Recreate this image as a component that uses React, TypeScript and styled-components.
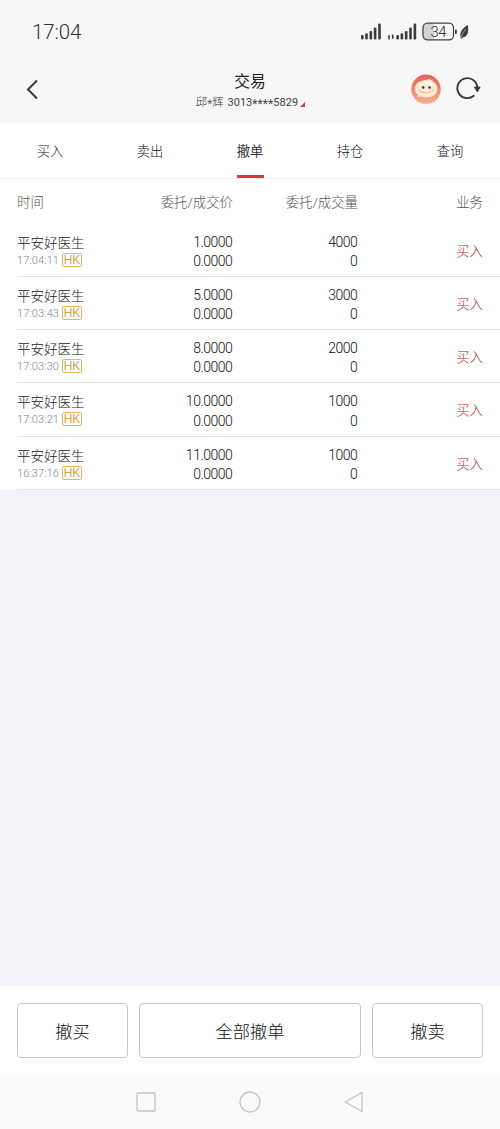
import React from 'react';
import styled, { createGlobalStyle } from 'styled-components';

const GlobalStyle = createGlobalStyle`
  * { box-sizing: border-box; }
  body { margin: 0; background: #f3f4f9; }
`;

const cjk = `'Noto Sans CJK SC', sans-serif`;

const Screen = styled.div`
  width: 500px;
  height: 1129px;
  display: flex;
  flex-direction: column;
  overflow: hidden;
  background: #f3f4f9;
  color: #444;
  font-family: Roboto, ${cjk};
  font-weight: 300;
`;

const StatusBar = styled.header`
  height: 56px;
  padding: 7px 31px 0 32px;
  display: flex;
  align-items: center;
  justify-content: space-between;
  background: #f7f7f7;
  flex: none;
`;

const Clock = styled.span`
  font-size: 20.5px;
  letter-spacing: -0.1px;
  color: #333;
`;

const TitleBar = styled.div`
  height: 67px;
  flex: none;
  display: grid;
  grid-template-columns: 100px 1fr 100px;
  background: #f7f7f7;
`;

const BackButton = styled.div`
  padding: 22px 0 0 25px;
`;

const TitleBlock = styled.div`
  display: flex;
  flex-direction: column;
  align-items: center;
  padding-top: 14px;
`;

const Title = styled.h1`
  margin: 0;
  font: 400 15.8px/22px ${cjk};
  color: #222;
`;

const Account = styled.div`
  display: flex;
  align-items: center;
  gap: 2px;
  padding: 1px 0 0 1px;
  font-size: 11px;
  line-height: 18px;
  color: #333;
  white-space: nowrap;
`;

const AccountNumber = styled.span`
  font-weight: 400;
  letter-spacing: 0.05px;
  margin-left: 1px;
  color: #444;
`;

const HolderName = styled.span`
  font-size: 11.4px;
`;

const Mask = styled.span`
  display: inline-block;
  vertical-align: -2px;
  font-size: 12px;
  line-height: 12px;
`;

const Corner = styled.svg`
  margin-top: 4px;
`;

const Actions = styled.div`
  display: flex;
  align-items: flex-start;
  gap: 14px;
  padding: 18px 0 0 11px;
`;

const Tabs = styled.nav`
  height: 56px;
  flex: none;
  display: grid;
  grid-template-columns: repeat(5, 1fr);
  background: #fff;
  border-bottom: 1px solid #f0f0f0;
`;

const Tab = styled.div<{ $active?: boolean }>`
  display: flex;
  flex-direction: column;
  align-items: center;
  justify-content: space-between;
  font: ${p => (p.$active ? 400 : 300)} 13.3px/56px ${cjk};
  color: ${p => (p.$active ? '#333' : '#111')};
  height: 55px;
  &::after {
    content: '';
    width: 27px;
    height: 3px;
    flex: none;
    margin-top: -4px;
    background: ${p => (p.$active ? '#d93a36' : 'transparent')};
  }
`;

const Table = styled.section`
  background: #fff;
  flex: none;
`;

const columns = `91px 125px 125px 125px`;

const HeadRow = styled.div`
  display: grid;
  grid-template-columns: ${columns};
  padding: 0 17px;
  height: 45px;
  line-height: 48px;
  font-size: 13.4px;
  color: #555;
`;

const HeadCell = styled.span<{ $right?: boolean }>`
  text-align: ${p => (p.$right ? 'right' : 'left')};
  white-space: nowrap;
`;

const Row = styled.div`
  display: grid;
  grid-template-columns: ${columns};
  height: 53.15px;
  margin-left: 17px;
  padding: 9px 17px 0 0;
  border-bottom: 1px solid #e4e4e6;
`;

const Stock = styled.div`
  font-size: 13.5px;
  line-height: 19px;
  padding-top: 1px;
  height: 19px;
  white-space: nowrap;
  color: #222;
`;

const Meta = styled.div`
  display: flex;
  align-items: center;
  gap: 3px;
  height: 16px;
`;

const Time = styled.span`
  width: 42px;
  font-size: 11px;
  letter-spacing: 0.1px;
  line-height: 17px;
  padding-top: 1px;
  color: #888;
`;

const Market = styled.span`
  width: 20px;
  height: 14px;
  flex: none;
  border: 1px solid #e8b55c;
  border-radius: 2px;
  font: 400 12px/12px 'Liberation Sans', sans-serif;
  text-align: center;
  color: #dfa045;
`;

const Figures = styled.div`
  text-align: right;
  font-size: 14px;
  line-height: 19.2px;
  letter-spacing: -0.5px;
  padding-right: 0.7px;
  color: #111;
`;

const Side = styled.div`
  text-align: right;
  font-size: 13.4px;
  line-height: 37px;
  color: #c02e2b;
`;

const Space = styled.div`
  flex: 1;
`;

const Footer = styled.div`
  height: 89px;
  flex: none;
  display: grid;
  grid-template-columns: 111px 222px 111px;
  gap: 11px;
  padding: 17px 17px 17px;
  background: #fff;
`;

const Button = styled.button`
  height: 55px;
  padding: 0;
  border: 1px solid #c8c8c8;
  border-radius: 4px;
  background: #fff;
  font: 300 17.3px/51px ${cjk};
  color: #111;
`;

const NavBar = styled.div`
  height: 54px;
  flex: none;
  display: flex;
  justify-content: center;
  align-items: center;
  gap: 82px;
  background: #fafafa;
`;

const StatusIcons = () => (
  <svg width="109" height="20" viewBox="360 21.500 109 20">
    <g fill="#3c3c3c">
      <rect x="361" y="34.5" width="2.6" height="4.5" rx="1" />
      <rect x="365.2" y="32.7" width="2.6" height="6.3" rx="1" />
      <rect x="369.5" y="30.5" width="2.6" height="8.5" rx="1" />
      <rect x="373.8" y="27" width="2.6" height="12" rx="1" />
      <rect x="378.2" y="23" width="2.6" height="16" rx="1" />
      <rect x="396.3" y="34.5" width="2.6" height="4.5" rx="1" />
      <rect x="400.6" y="32.7" width="2.6" height="6.3" rx="1" />
      <rect x="404.9" y="30.5" width="2.6" height="8.5" rx="1" />
      <rect x="409.2" y="27" width="2.6" height="12" rx="1" />
      <rect x="413.6" y="23" width="2.6" height="16" rx="1" />
      <path d="M387.2 36.500l2.600-2.600v5.100h-1.500v-2.500zM394.500 36.500l-2.600 2.500v-5.100h1.500v2.600z" />
      <rect x="455" y="29" width="1.800" height="4.500" rx=".8" />
      <path d="M467.6 24.2c1.5 5.8.5 11.8-4.8 12.8l-1.3 1.5-.8-.7c-1.6-7.2 2.2-9.6 6.900-13.600z" />
    </g>
    <path d="M461.300 37.500c.8-4.200 2.300-6.500 4.800-8.900" stroke="#f7f7f7" strokeWidth=".5" fill="none" />
    <path d="M427 23h7v16h-7a4 4 0 0 1-4-4v-8a4 4 0 0 1 4-4z" fill="#d4d4d4" />
    <rect x="423" y="22.700" width="30.500" height="16.600" rx="4.500" fill="none" stroke="#444" strokeWidth="1.300" />
    <text x="438.300" y="36.300" textAnchor="middle" fontFamily="Roboto, sans-serif" fontSize="14.800" fontWeight="300" letterSpacing="-0.4" fill="#222">34</text>
  </svg>
);

const Avatar = () => (
  <svg width="30" height="30" viewBox="0 0 30 30">
    <defs>
      <linearGradient id="disc" x1="0" y1="0" x2="0" y2="1">
        <stop offset="0" stopColor="#e95f58" />
        <stop offset=".55" stopColor="#f2886f" />
        <stop offset="1" stopColor="#f7b399" />
      </linearGradient>
    </defs>
    <circle cx="15" cy="15.300" r="14.700" fill="url(#disc)" />
    <path d="M4.500 18.500C2.500 14 4.500 9.500 8.500 7.500c2.500-1.300 4.300-1 6-1.600 2-.6 3.200-1.500 4.600-1.300l-.3 1.500 3-.5-.5 1.500c3.500 1.700 5.200 4.700 5 8.500-.2 4.500-3.400 6.800-7.500 7.500-3.600.7-7.300.4-9.600-.8-.9.400-1.900.5-3.200.200.900-.5 1-1.300.8-2.100-.9-.5-1.700-1-2.300-1.900z" fill="#ffe9d3" />
    <path d="M8 10c2.500-1.500 4.500-1.700 6.500-2.200 1.500.9 4.500 1 7 2.700" fill="none" stroke="#fffaf2" strokeWidth="2.200" />
    <circle cx="12.200" cy="13.600" r="1.250" fill="#38302f" />
    <circle cx="18.500" cy="13.600" r="1.250" fill="#38302f" />
    <path d="M8.500 18.500c1.800-1 3.500-.3 5.400.2 2.300.4 4.500-.2 6-1.300" fill="none" stroke="#f0ab84" strokeWidth=".9" />
    <circle cx="8.800" cy="16.200" r="1.200" fill="#fdd0b2" />
    <circle cx="22" cy="16.200" r="1.200" fill="#fdd0b2" />
  </svg>
);

const Refresh = () => (
  <svg width="27" height="28" viewBox="0 -1 27 28">
    <path d="M18.800 20.800A10 10 0 1 1 22.300 12" fill="none" stroke="#3b3b3b" strokeWidth="1.900" strokeLinecap="round" />
    <path d="M19.300 12h5.900l-2.900 5z" fill="#3b3b3b" stroke="#3b3b3b" strokeWidth=".8" strokeLinejoin="round" />
  </svg>
);

const orders = [
  { time: '17:04:11', price: '1.0000', qty: '4000' },
  { time: '17:03:43', price: '5.0000', qty: '3000' },
  { time: '17:03:30', price: '8.0000', qty: '2000' },
  { time: '17:03:21', price: '10.0000', qty: '1000' },
  { time: '16:37:16', price: '11.0000', qty: '1000' },
];

export default function App() {
  return (
    <Screen>
      <GlobalStyle />
      <StatusBar>
        <Clock>17:04</Clock>
        <StatusIcons />
      </StatusBar>
      <TitleBar>
        <BackButton>
          <svg width="16" height="24" viewBox="0 0 16 24">
            <path d="M12 2.500L3 11.500l9 9" fill="none" stroke="#3b3b3b" strokeWidth="2" />
          </svg>
        </BackButton>
        <TitleBlock>
          <Title>交易</Title>
          <Account>
            <span>
              <HolderName>邱<Mask>*</Mask>辉</HolderName>{' '}
              <AccountNumber>3013<Mask>****</Mask>5829</AccountNumber>
            </span>
            <Corner width="5" height="5" viewBox="0 0 5 5"><path d="M5 0v5H0z" fill="#d93a42" /></Corner>
          </Account>
        </TitleBlock>
        <Actions>
          <Avatar />
          <Refresh />
        </Actions>
      </TitleBar>
      <Tabs>
        {['买入', '卖出', '撤单', '持仓', '查询'].map(t => (
          <Tab key={t} $active={t === '撤单'}>{t}</Tab>
        ))}
      </Tabs>
      <Table>
        <HeadRow>
          <HeadCell>时间</HeadCell>
          <HeadCell $right>委托/成交价</HeadCell>
          <HeadCell $right>委托/成交量</HeadCell>
          <HeadCell $right>业务</HeadCell>
        </HeadRow>
        {orders.map(o => (
          <Row key={o.time}>
            <div>
              <Stock>平安好医生</Stock>
              <Meta>
                <Time>{o.time}</Time>
                <Market>HK</Market>
              </Meta>
            </div>
            <Figures>{o.price}<br />0.0000</Figures>
            <Figures>{o.qty}<br />0</Figures>
            <Side>买入</Side>
          </Row>
        ))}
      </Table>
      <Space />
      <Footer>
        <Button>撤买</Button>
        <Button>全部撤单</Button>
        <Button>撤卖</Button>
      </Footer>
      <NavBar>
        <svg width="22" height="22" viewBox="0 0 22 22"><rect x="2" y="2" width="18" height="18" rx="1" fill="none" stroke="#c4c4c4" strokeWidth="1.300" /></svg>
        <svg width="22" height="22" viewBox="0 0 22 22"><circle cx="11" cy="11" r="10" fill="none" stroke="#c4c4c4" strokeWidth="1.300" /></svg>
        <svg width="22" height="22" viewBox="0 0 22 22"><path d="M19 1.500v19L2 11z" fill="none" stroke="#c4c4c4" strokeWidth="1.300" strokeLinejoin="round" /></svg>
      </NavBar>
    </Screen>
  );
}
